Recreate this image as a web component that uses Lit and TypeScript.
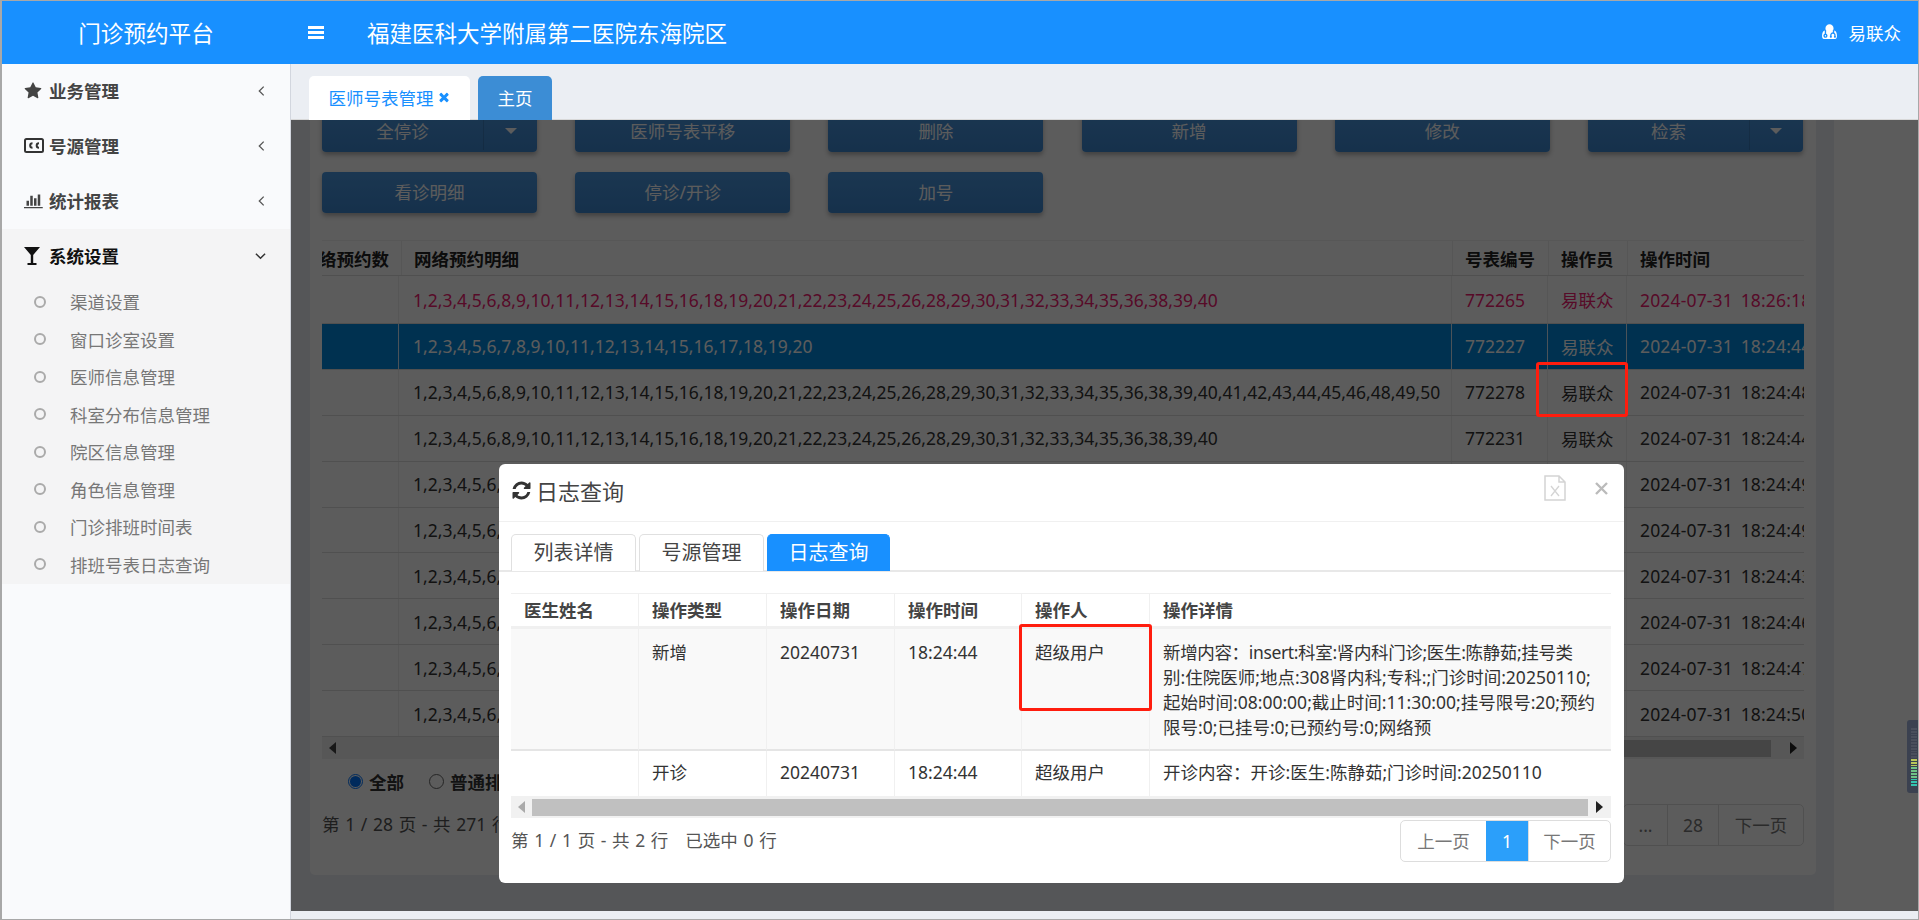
import { LitElement, html, css } from "lit";
import { customElement } from "lit/decorators.js";

const seq = (skip: number[], end: number) => {
  const out: number[] = [];
  for (let i = 1; i <= end; i++) if (!skip.includes(i)) out.push(i);
  return out.join(",");
};
const L40 = seq([7, 17, 27, 37], 40);
const L50 = seq([7, 17, 27, 37, 47], 50);
const L20 = seq([], 20);

const ROWS = [
  { k: "red first", list: L40, id: "772265", t: "2024-07-31 18:26:18" },
  { k: "sel", list: L20, id: "772227", t: "2024-07-31 18:24:44" },
  { k: "", list: L50, id: "772278", t: "2024-07-31 18:24:48" },
  { k: "", list: L40, id: "772231", t: "2024-07-31 18:24:44" },
  { k: "", list: L40, id: "772232", t: "2024-07-31 18:24:49" },
  { k: "", list: L40, id: "772233", t: "2024-07-31 18:24:49" },
  { k: "", list: L40, id: "772234", t: "2024-07-31 18:24:43" },
  { k: "", list: L40, id: "772235", t: "2024-07-31 18:24:46" },
  { k: "", list: L40, id: "772236", t: "2024-07-31 18:24:47" },
  { k: "", list: L40, id: "772237", t: "2024-07-31 18:24:50" },
];

const chevL = html`<svg class="chev" viewBox="0 0 8 12"><path d="M6.5 1 1.5 6l5 5" fill="none" stroke="currentColor" stroke-width="1.5"/></svg>`;
const chevD = html`<svg class="chev d" viewBox="0 0 12 8"><path d="M1 1.5 6 6.5l5-5" fill="none" stroke="currentColor" stroke-width="1.6"/></svg>`;

@customElement("app-root")
export class AppRoot extends LitElement {
  static styles = css`
    :host {
      display: block; width: 1919px; height: 920px; box-sizing: border-box; position: relative; overflow: hidden;
      border-top: 1px solid #a8a8a8; border-left: 2px solid #a8a8a8; border-right: 1px solid #a8a8a8; border-bottom: 1px solid #a8a8a8;
      font-family: "Noto Sans", "Noto Sans CJK SC", sans-serif; font-size: 17.5px; color: #333; background: #ebeef3;
    }
    * { box-sizing: border-box; }
    .top { height: 63px; background: #1890ff; color: #fff; display: flex; align-items: center; }
    .logo { width: 288px; text-align: center; font-size: 22.6px; }
    .burger { width: 16px; height: 13px; margin-left: 18px; display: flex; flex-direction: column; justify-content: space-between; }
    .burger i { display: block; height: 3px; background: #fff; }
    .title { margin-left: 43px; font-size: 22.5px; flex: 1; }
    .user { display: flex; align-items: center; gap: 10px; margin-right: 17px; }
    .user svg { width: 19px; height: 19px; }
    .body { display: flex; height: 855px; }
    .side { width: 289px; background: #f9fafc; border-right: 1px solid #d2d6de; flex: none; }
    .mi { height: 55px; display: flex; align-items: center; padding: 0 0 2px 22px; font-weight: 700; color: #444; }
    .mi .ic { width: 25px; display: flex; }
    .mi .lb { flex: 1; }
    .chev { width: 7px; height: 12px; margin-right: 25px; color: #555; }
    .chev.d { width: 11px; height: 8px; margin-right: 24px; color: #333; }
    .open { background: #f4f4f5; }
    .open .mi { color: #111; }
    .sub { height: 37.5px; display: flex; align-items: center; color: #777; padding: 0 0 2px 32px; }
    .sub i { width: 12px; height: 12px; border: 2.5px solid #aaa; border-radius: 50%; margin-right: 24px; }
    .main { flex: 1; display: flex; flex-direction: column; min-width: 0; position: relative; }
    .tabs { height: 56px; padding: 12px 0 0 18px; display: flex; gap: 8px; position: relative; z-index: 3; background: #ebeef3; border-bottom: 1px solid #d8d8d8; }
    .tab { height: 44px; border-radius: 5px 5px 0 0; display: flex; align-items: center; justify-content: center; padding-bottom: 2px; }
    .tab.a { width: 161px; background: #fff; color: #1890ff; gap: 3px; }
    .tab.b { width: 74px; background: #3c8dd5; color: #fff; }
    .tab svg { width: 14px; height: 14px; }
    .stage { flex: 1; display: flex; min-height: 0; background: #ebeef3; position: relative; overflow: hidden; }
    .right { width: 84px; background: #fff; flex: none; margin-left: auto; }
    .wrap { flex: 1; background: #ebeef3; padding: 0 18px 44px 19px; display: flex; min-width: 0; }
    .panel { flex: 1; background: #fff; border-radius: 0 0 5px 5px; padding: 0 12px; display: flex; flex-direction: column; min-width: 0; overflow: hidden; margin-top: -9px; }
    .btns { display: grid; grid-template-columns: repeat(6, 215px); column-gap: 38.2px; row-gap: 20px; }
    .btn { height: 41px; background: linear-gradient(#4a97e0, #3d87d0); border-radius: 4px; box-shadow: 0 3px 5px rgba(0,0,0,.3); color: #fff; display: flex; align-items: center; justify-content: center; position: relative; padding-bottom: 2px; }
    .btn .t { flex: 1; text-align: center; }
    .btn .c { width: 54px; height: 100%; border-left: 1px solid rgba(0,0,0,.12); display: flex; align-items: center; justify-content: center; }
    .btn .c i { border: 6px solid transparent; border-top: 6px solid #fff; border-bottom: 0; }
    .thead, .tr { display: grid; border-bottom: 1px solid #ddd; }
    .thead { grid-template-columns: 80px 1051px 96px 79px 176px; height: 36px; margin-top: 27px; border-top: 1px solid #f0f0f0; font-weight: 700; color: #222; flex: none; }
    .thead div { display: flex; align-items: center; padding-left: 12px; overflow: hidden; white-space: nowrap; border-right: 1px solid #eee; }
    .thead div:first-child { justify-content: flex-end; padding: 0 12px 0 0; }
    .thead div:last-child { border-right: 0; }
    .tr { grid-template-columns: 77px 1053px 96px 79px 177px; height: 45.9px; flex: none; }
    .tr.first { height: 48px; }
    .tr div { display: flex; align-items: center; padding-left: 13px; overflow: hidden; white-space: nowrap; border-right: 1px solid #eee; }
    .tr div:nth-child(2) { padding-left: 14px; }
    .tr div:last-child { border-right: 0; letter-spacing: .16px; word-spacing: 3px; }
    .tr.red { color: #f02070; }
    .tr.sel { background: #0088dd; color: #fff; }
    .tr.sel div { border-right-color: #cfe6f5; }
    .hbar { height: 22px; background: #f1f1f1; display: flex; align-items: center; flex: none; }
    .arr { width: 21px; height: 100%; display: flex; align-items: center; justify-content: center; flex: none; }
    .arr.r { width: 23px; }
    .arr.l i { border: 6px solid transparent; border-right: 7px solid #444; border-left: 0; }
    .arr.l.pale i { border-right-color: #aaa; }
    .arr.r i { border: 6px solid transparent; border-left: 7px solid #222; border-right: 0; }
    .thumb { flex: 1; height: 17px; background: #c0c0c0; }
    .skip { width: 300px; flex: none; }
    .hbar.outer .arr.r { width: 33px; padding-left: 11px; }
    .radios { display: flex; align-items: center; height: 44px; padding-left: 26px; font-weight: 700; color: #333; flex: none; }
    .radio { width: 15px; height: 15px; border-radius: 50%; border: 1px solid #666; margin-right: 6px; background: #fff; display: flex; align-items: center; justify-content: center; }
    .radio.on { border: 1px solid #0075ff; }
    .radio.on i { width: 11px; height: 11px; background: #0075ff; border-radius: 50%; }
    .rlabel { margin-right: 25px; white-space: nowrap; }
    .foot { display: flex; align-items: flex-start; justify-content: space-between; margin-top: 1px; }
    .info { line-height: 40px; color: #555; white-space: pre; word-spacing: 1.1px; }
    .pager { display: flex; height: 42px; border: 1px solid #ddd; border-radius: 5px; color: #777; flex: none; }
    .pager span { display: flex; align-items: center; justify-content: center; border-left: 1px solid #ddd; padding-bottom: 1px; }
    .pager span:first-child { border-left: 0; }
    .pager span.on { background: #2b9ffa; color: #fff; border-left: 0; }
    .w43 { width: 43px; } .w51 { width: 51px; } .w85 { width: 85px; } .w84 { width: 85px; } .w42 { width: 42px; } .w83 { width: 82px; }
    .shade { position: absolute; inset: 0; background: rgba(0,0,0,.64); z-index: 2; }
    .bottom { position: absolute; left: 0; right: 0; bottom: 0; height: 8px; background: #ebeef3; z-index: 3; }
    .modal { position: absolute; left: 497px; top: 463px; width: 1125px; height: 419px; background: #fff; border-radius: 6px; z-index: 5; display: flex; flex-direction: column; }
    .mhead { height: 58px; border-bottom: 1px solid #f0f0f0; display: flex; align-items: center; padding: 0 16px 5px 12px; flex: none; }
    .mhead .name { flex: 1; font-size: 22px; display: flex; align-items: center; gap: 4px; color: #444; }
    .mhead .name svg { width: 21px; height: 21px; flex: none; }
    .xls { width: 22px; height: 26px; margin: 0 29px 4px 0; }
    .close { width: 13px; height: 13px; margin-bottom: 4px; }
    .mtabs { height: 50px; padding: 12px 12px 0; display: flex; gap: 3px; border-bottom: 2px solid #e8e8e8; flex: none; }
    .mtab { width: 125px; height: 37px; border: 1px solid #e0e0e0; border-bottom: 0; border-radius: 5px 5px 0 0; font-size: 20px; display: flex; align-items: center; justify-content: center; color: #444; padding-bottom: 3px; background: #fff; position: relative; }
    .mtab.on { background: #1890ff; color: #fff; border-color: #1890ff; width: 123px; }
    .mbody { padding: 21px 13px 0 12px; display: flex; flex-direction: column; flex: 1; min-height: 0; }
    .grid { display: grid; grid-template-columns: 128px 128px 128px 127px 128px 1fr; flex: none; }
    .grid > div { padding: 0 13px; border-right: 1px solid #f0f0f0; }
    .grid > div:nth-child(6n) { border-right: 0; }
    .gh > div { height: 36px; display: flex; align-items: center; font-weight: 700; color: #444; border-top: 1px solid #f0f0f0; border-bottom: 3px solid #f0f0f0; background: #fff; padding-bottom: 2px; }
    .g1 > div { height: 122px; background: #f9f9f9; line-height: 25px; border-bottom: 2px solid #e5e5e5; color: #333; padding-top: 11px; }
    .g2 > div { height: 45px; line-height: 42px; color: #333; white-space: nowrap; }
    .tight { letter-spacing: -.35px; }
    .mfoot { display: flex; justify-content: space-between; margin-top: 2px; }
    .mark { position: absolute; border: 3.5px solid #ff1d0e; border-radius: 3px; z-index: 6; pointer-events: none; }
    .mark.a { left: 1534px; top: 361px; width: 92px; height: 55px; }
    .mark.b { left: 1017px; top: 623px; width: 133px; height: 87px; }
    .meter { position: absolute; right: 0; top: 719px; width: 11px; height: 73px; z-index: 6; background: #3b4150; border-radius: 3px 0 0 3px; display: flex; flex-direction: column; gap: 1px; padding: 8px 1px 7px 4px; }
    .meter i { flex: 1; display: block; }
  `;

  render() {
    const meter = Array.from({ length: 21 }, (_, i) =>
      i < 11 ? "#4a4f5c" : i < 14 ? "#b9c65a" : i < 18 ? "#6fc287" : "#33c4b0");
    return html`
      <div class="top">
        <div class="logo">门诊预约平台</div>
        <div class="burger"><i></i><i></i><i></i></div>
        <div class="title">福建医科大学附属第二医院东海院区</div>
        <div class="user">
          <svg viewBox="0 0 1792 1792"><path fill="#fff" d="M576 1200q0 27-18.500 45.500t-45.500 18.500-45.500-18.500-18.500-45.500 18.500-45.500 45.500-18.500 45.500 18.500 18.500 45.500zm1024 61q0 121-73 190t-194 69h-874q-121 0-194-69t-73-190q0-68 5.500-131t24-138 47.500-132.500 81-103 120-60.500q-22 52-22 120v203q-58 20-93 70t-35 111q0 80 56 136t136 56 136-56 56-136q0-61-35.500-111t-92.500-70v-203q0-62 25-93 132 104 295 104t295-104q25 31 25 93v64q-106 0-181 75t-75 181v89q-32 29-32 71 0 40 28 68t68 28 68-28 28-68q0-42-32-71v-89q0-52 38-90t90-38 90 38 38 90v89q-32 29-32 71 0 40 28 68t68 28 68-28 28-68q0-42-32-71v-89q0-68-34.500-127.500t-93.500-93.500q0-10 .5-42.500t0-48-2.500-41.500-7-47-13-40q68 15 120 60.500t81 103 47.500 132.500 24 138 5.500 131zm-320-749q0 159-112.500 271.500t-271.500 112.500-271.500-112.500-112.500-271.500 112.500-271.500 271.500-112.500 271.500 112.500 112.500 271.500z"/></svg>
          <span>易联众</span>
        </div>
      </div>
      <div class="body">
        <aside class="side">
          <div class="mi"><span class="ic"><svg width="18" height="18" viewBox="0 0 1792 1792"><path fill="#444" d="M1728 647q0 22-26 48l-363 354 86 500q1 7 1 20 0 21-10.500 35.500t-30.500 14.500q-19 0-40-12l-449-236-449 236q-22 12-40 12-21 0-31.500-14.500t-10.500-35.500q0-6 2-20l86-500-364-354q-25-27-25-48 0-37 56-46l502-73 225-455q19-41 49-41t49 41l225 455 502 73q56 9 56 46z"/></svg></span><span class="lb">业务管理</span>${chevL}</div>
          <div class="mi"><span class="ic"><svg width="20" height="15" viewBox="0 0 20 15"><rect x="1" y="1" width="18" height="13" rx="1.500" fill="none" stroke="#333" stroke-width="2"/><path d="M8.500 5.200a2.300 2.300 0 1 0 0 4.600M15 5.200a2.300 2.300 0 1 0 0 4.600" fill="none" stroke="#333" stroke-width="2"/></svg></span><span class="lb">号源管理</span>${chevL}</div>
          <div class="mi"><span class="ic"><svg width="20" height="17.500" viewBox="0 0 2048 1792"><path fill="#444" d="M512 896v512h-256v-512h256zm384-512v1024h-256v-1024h256zm1024 1152v128h-2048v-1536h128v1408h1920zm-640-896v768h-256v-768h256zm384-384v1152h-256v-1152h256z"/></svg></span><span class="lb">统计报表</span>${chevL}</div>
          <div class="open">
            <div class="mi"><span class="ic"><svg width="16" height="18" viewBox="0 0 16 18"><path d="M0 0h16L9.200 8V16h3.300v2h-9v-2h3.300V8z" fill="#111"/></svg></span><span class="lb">系统设置</span>${chevD}</div>
            ${["渠道设置", "窗口诊室设置", "医师信息管理", "科室分布信息管理", "院区信息管理", "角色信息管理", "门诊排班时间表", "排班号表日志查询"].map(
              (s) => html`<div class="sub"><i></i><span>${s}</span></div>`)}
          </div>
        </aside>
        <div class="main">
          <div class="tabs">
            <div class="tab a">医师号表管理<svg viewBox="0 0 1792 1792"><path fill="#1890ff" d="M1490 1322q0 40-28 68l-136 136q-28 28-68 28t-68-28l-294-294-294 294q-28 28-68 28t-68-28l-136-136q-28-28-28-68t28-68l294-294-294-294q-28-28-28-68t28-68l136-136q28-28 68-28t68 28l294 294 294-294q28-28 68-28t68 28l136 136q28 28 28 68t-28 68l-294 294 294 294q28 28 28 68z"/></svg></div>
            <div class="tab b">主页</div>
          </div>
          <div class="stage">
            <div class="wrap">
              <div class="panel">
                <div class="btns">
                  <div class="btn"><span class="t">全停诊</span><span class="c"><i></i></span></div>
                  <div class="btn">医师号表平移</div>
                  <div class="btn">删除</div>
                  <div class="btn">新增</div>
                  <div class="btn">修改</div>
                  <div class="btn"><span class="t">检索</span><span class="c"><i></i></span></div>
                  <div class="btn">看诊明细</div>
                  <div class="btn">停诊/开诊</div>
                  <div class="btn">加号</div>
                </div>
                <div class="thead"><div>网络预约数</div><div>网络预约明细</div><div>号表编号</div><div>操作员</div><div>操作时间</div></div>
                ${ROWS.map((r) => html`<div class="tr ${r.k}"><div></div><div>${r.list}</div><div>${r.id}</div><div>易联众</div><div>${r.t}</div></div>`)}
                <div class="hbar outer"><span class="arr l"><i></i></span><span class="skip"></span><span class="thumb"></span><span class="arr r"><i></i></span></div>
                <div class="radios"><span class="radio on"><i></i></span><span class="rlabel">全部</span><span class="radio"></span><span class="rlabel">普通排班</span></div>
                <div class="foot"><span class="info">第 1 / 28 页 - 共 271 行</span>
                  <div class="pager"><span class="w43">...</span><span class="w51">28</span><span class="w85">下一页</span></div>
                </div>
              </div>
            </div>
            <div class="right"></div>
            <div class="shade"></div>
          </div>
          <div class="bottom"></div>
        </div>
      </div>

      <div class="modal">
        <div class="mhead">
          <div class="name"><svg viewBox="0 0 1792 1792"><path fill="#333" d="M1639 1056q0 5-1 7-64 268-268 434.500t-478 166.500q-146 0-282.500-55t-243.500-157l-129 129q-19 19-45 19t-45-19-19-45v-448q0-26 19-45t45-19h448q26 0 45 19t19 45-19 45l-137 137q71 66 161 102t187 36q134 0 250-65t186-179q11-17 53-117 8-23 30-23h192q13 0 22.500 9.500t9.500 22.500zm25-800v448q0 26-19 45t-45 19h-448q-26 0-45-19t-19-45 19-45l138-138q-148-137-349-137-134 0-250 65t-186 179q-11 17-53 117-8 23-30 23h-199q-13 0-22.500-9.500t-9.500-22.500v-7q65-268 270-434.500t480-166.500q146 0 284 55.500t245 156.500l130-129q19-19 45-19t45 19 19 45z"/></svg><span>日志查询</span></div>
          <svg class="xls" viewBox="0 0 22 26"><path d="M1 1h14l6 6v18H1zM15 1v6h6" fill="none" stroke="#d4d4d4" stroke-width="1.500"/><path d="M7 11l8 10M15 11l-8 10" stroke="#d4d4d4" stroke-width="1.300"/></svg>
          <svg class="close" viewBox="0 0 13 13"><path d="M1 1l11 11M12 1L1 12" stroke="#bbb" stroke-width="2.400"/></svg>
        </div>
        <div class="mtabs">
          <div class="mtab">列表详情</div><div class="mtab">号源管理</div><div class="mtab on">日志查询</div>
        </div>
        <div class="mbody">
          <div class="grid gh"><div>医生姓名</div><div>操作类型</div><div>操作日期</div><div>操作时间</div><div>操作人</div><div>操作详情</div></div>
          <div class="grid g1"><div></div><div>新增</div><div>20240731</div><div>18:24:44</div><div>超级用户</div><div><span class="tight">新增内容：insert:科室:肾内科门诊;医生:陈静茹;挂号类</span><br>别:住院医师;地点:308肾内科;专科:;门诊时间:20250110;<br>起始时间:08:00:00;截止时间:11:30:00;挂号限号:20;预约<br>限号:0;已挂号:0;已预约号:0;网络预</div></div>
          <div class="grid g2"><div></div><div>开诊</div><div>20240731</div><div>18:24:44</div><div>超级用户</div><div>开诊内容：开诊:医生:陈静茹;门诊时间:20250110</div></div>
          <div class="hbar"><span class="arr l pale"><i></i></span><span class="thumb"></span><span class="arr r"><i></i></span></div>
          <div class="mfoot"><span class="info">第 1 / 1 页 - 共 2 行   已选中 0 行</span>
            <div class="pager"><span class="w84">上一页</span><span class="on w42">1</span><span class="w83">下一页</span></div>
          </div>
        </div>
      </div>
      <div class="mark a"></div>
      <div class="mark b"></div>
      <div class="meter">${meter.map((c) => html`<i style="background:${c}"></i>`)}</div>
    `;
  }
}
